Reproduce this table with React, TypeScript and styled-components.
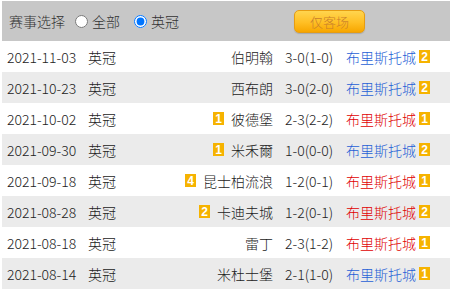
import React from "react";
import styled, { createGlobalStyle } from "styled-components";

const GlobalStyle = createGlobalStyle`
  html, body {
    margin: 0;
    padding: 0;
    background: #ffffff;
  }
  body {
    font-family: "Noto Sans CJK SC", "Noto Sans", sans-serif;
    font-size: 13px;
    font-weight: 300;
    color: #222222;
  }
`;

interface Match {
  date: string;
  home: string;
  homeRank?: number;
  score: string;
  awayRank: number;
  win: boolean;
}

const matches: Match[] = [
  { date: "2021-11-03", home: "伯明翰", score: "3-0(1-0)", awayRank: 2, win: false },
  { date: "2021-10-23", home: "西布朗", score: "3-0(2-0)", awayRank: 2, win: false },
  { date: "2021-10-02", home: "彼德堡", homeRank: 1, score: "2-3(2-2)", awayRank: 1, win: true },
  { date: "2021-09-30", home: "米禾爾", homeRank: 1, score: "1-0(0-0)", awayRank: 2, win: false },
  { date: "2021-09-18", home: "昆士柏流浪", homeRank: 4, score: "1-2(0-1)", awayRank: 1, win: true },
  { date: "2021-08-28", home: "卡迪夫城", homeRank: 2, score: "1-2(0-1)", awayRank: 2, win: true },
  { date: "2021-08-18", home: "雷丁", score: "2-3(1-2)", awayRank: 1, win: true },
  { date: "2021-08-14", home: "米杜士堡", score: "2-1(1-0)", awayRank: 1, win: false },
];

export default function App() {
  return (
    <>
      <GlobalStyle />
      <Panel>
        <FilterBar>
          <FilterLabel>赛事选择</FilterLabel>
          <RadioLabel>
            <Radio type="radio" name="league" />
            全部
          </RadioLabel>
          <RadioLabel>
            <Radio type="radio" name="league" defaultChecked />
            英冠
          </RadioLabel>
          <AwayButton>仅客场</AwayButton>
        </FilterBar>
        {matches.map((m, i) => (
          <Row key={m.date} $alt={i % 2 === 1}>
            <Cell>{m.date}</Cell>
            <Cell>英冠</Cell>
            <HomeCell>
              {m.homeRank && <Rank>{m.homeRank}</Rank>}
              {m.home}
            </HomeCell>
            <ScoreCell>{m.score}</ScoreCell>
            <AwayCell $win={m.win}>
              布里斯托城
              <Rank>{m.awayRank}</Rank>
            </AwayCell>
          </Row>
        ))}
      </Panel>
    </>
  );
}

const Panel = styled.div`
  width: 451px;
  box-sizing: border-box;
  padding: 1px 1px 0 2px;
  display: flex;
  flex-direction: column;
`;

const FilterBar = styled.div`
  height: 40px;
  background: #c7c7c7;
  display: flex;
  align-items: center;
  padding-left: 7px;
  color: #333333;
  font-size: 14px;
`;

const FilterLabel = styled.span`
  margin-right: 10px;
`;

const RadioLabel = styled.label`
  display: flex;
  align-items: center;
  gap: 4px;
  margin-right: 14px;
`;

const Radio = styled.input`
  width: 13px;
  height: 13px;
  margin: 0;
`;

const AwayButton = styled.button`
  margin-left: 101px;
  width: 71px;
  height: 23px;
  border: 1px solid #e69d12;
  border-radius: 5px;
  background: linear-gradient(#ffd54f, #ffbf24 55%, #f7a600);
  box-shadow: 0 1px 1px rgba(0, 0, 0, 0.15);
  color: #c9802c;
  font-family: "Noto Sans CJK SC", sans-serif;
  font-size: 13px;
  font-weight: 300;
  padding: 0;
`;

const Row = styled.div<{ $alt: boolean }>`
  height: 31px;
  display: grid;
  grid-template-columns: 81px 40px 1fr 73px 104px;
  align-items: center;
  padding-left: 5px;
  background: ${({ $alt }) => ($alt ? "#ebebeb" : "#ffffff")};
  font-size: 14px;
`;

const Cell = styled.div`
  white-space: nowrap;
`;

const HomeCell = styled.div`
  display: flex;
  justify-content: flex-end;
  align-items: center;
  gap: 7px;
  white-space: nowrap;
`;

const ScoreCell = styled.div`
  padding-left: 12px;
  white-space: nowrap;
`;

const AwayCell = styled.div<{ $win: boolean }>`
  display: flex;
  align-items: center;
  gap: 3px;
  white-space: nowrap;
  color: ${({ $win }) => ($win ? "#e00000" : "#1f5fd6")};
`;

const Rank = styled.span`
  display: inline-flex;
  align-items: center;
  justify-content: center;
  width: 11px;
  height: 13px;
  background: #f6b300;
  color: #ffffff;
  font-family: "Liberation Sans", sans-serif;
  font-weight: bold;
  font-size: 12px;
`;
